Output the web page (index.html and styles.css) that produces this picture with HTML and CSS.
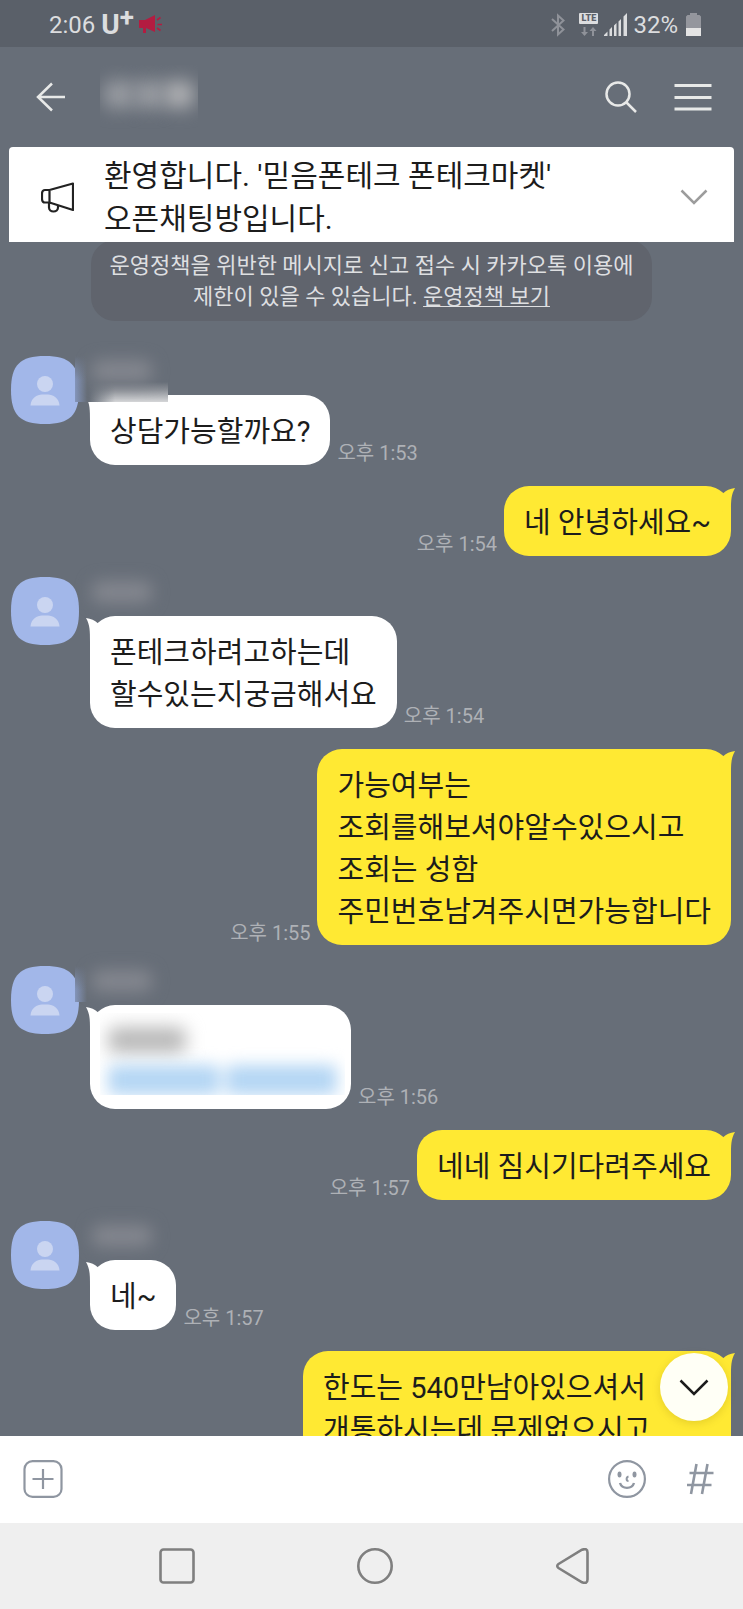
FILE: index.html
```html
<!DOCTYPE html>
<html lang="ko">
<head>
<meta charset="utf-8">
<meta name="viewport" content="width=device-width, initial-scale=1">
<title>오픈채팅</title>
<link rel="stylesheet" href="styles.css">
</head>
<body>
<svg class="defs" aria-hidden="true">
  <symbol id="avatar" viewBox="0 0 68 68">
    <path d="M34 0C59 0 68 9 68 34S59 68 34 68 0 59 0 34 9 0 34 0Z" fill="#a2b7e9"/>
    <circle cx="34" cy="28" r="8" fill="#cad5f1"/>
    <path d="M19.500 49.500C20 42 26 38.500 31 38.500h6c5 0 11 3.500 11.500 11Z" fill="#cad5f1"/>
  </symbol>
  <symbol id="tail" viewBox="0 0 16 24">
    <path d="M0 0C5 .5 9 2.500 11.500 5L16 12 12 24H4C4 13 4 7 0 0Z" fill="currentColor"/>
  </symbol>
</svg>
<div class="app">
  <div class="status">
    <span class="clock">2:06</span>
    <span class="carrier">U<span class="carrier-plus">+</span></span>
    <svg class="promo" width="24" height="20" viewBox="0 0 24 20" fill="#b31c41"><path d="M0 5h6L16 0v17L7 13v5H4v-5H0Z"/><path d="M18 5l3.500-2.500M18.500 9.500H23M18 13l3.500 2.500" stroke="#b31c41" stroke-width="1.600"/></svg>
    <span class="spacer"></span>
    <svg width="14" height="24" viewBox="0 0 14 24" fill="none" stroke="#8f9299" stroke-width="2"><path d="M1 6l11.500 10.500L7 21.500v-19L12.500 7.500 1 18"/></svg>
    <span class="network">
      <span class="lte">LTE</span>
      <svg width="16" height="9" viewBox="0 0 16 9" fill="#8f9299"><path d="M2.500 0h2v5H7L3.500 9 0 5h2.500ZM11 9h2V4h2.500L12 0 8.500 4H11Z"/></svg>
    </span>
    <svg width="24" height="23" viewBox="0 0 24 23" fill="#dcdddf"><path d="M0 23v-1l3.500-3.500V23ZM5.500 23v-6.500L8 14v9ZM10 23V12.500L12.500 10v13ZM14.500 23V8.500L17 6v17ZM19.500 23V3.500L23 0v23Z"/></svg>
    <span class="percent">32%</span>
    <svg width="15" height="23" viewBox="0 0 15 23"><path d="M4 0h7v2h2.500L15 3.500V23H0V3.500L1.500 2H4Z" fill="#94969d"/><path d="M0 15h15v8H0Z" fill="#e4e4e4"/></svg>
  </div>

  <header class="header">
    <button class="icon-button" aria-label="뒤로"><svg width="30" height="30" viewBox="0 0 30 30" fill="none" stroke="#e8e9e8" stroke-width="2.500"><path d="M29 15H2M16 1.500L2 15l14 13.500"/></svg></button>
    <div class="redacted-title"><i></i><i></i><i></i></div>
    <span class="spacer"></span>
    <button class="icon-button" aria-label="검색"><svg width="32" height="32" viewBox="0 0 32 32" fill="none" stroke="#e8e9e8" stroke-width="2.500"><circle cx="13" cy="13" r="11.500"/><path d="M21 21l10 10"/></svg></button>
    <button class="icon-button" aria-label="메뉴"><svg width="38" height="30" viewBox="0 0 38 30" fill="none" stroke="#e8e9e8" stroke-width="3"><path d="M.5 3.500h37M.5 15.500h37M.5 27h37"/></svg></button>
  </header>

  <section class="notice">
    <svg class="horn" width="33" height="31" viewBox="0 0 33 31" fill="none" stroke="#222" stroke-width="2.200" stroke-linejoin="round"><path d="M8.500 8L32 1.500V28L8.500 20.500M8.500 8v12.500M8.500 8H4Q1 8 1 12v4.500q0 4 3 4h4.500M8 20.500v5a4.500 4 0 0 0 9 0v-2"/></svg>
    <p class="notice-text">환영합니다. '믿음폰테크 폰테크마켓'<br>오픈채팅방입니다.</p>
    <button class="icon-button" aria-label="펼치기"><svg width="28" height="16" viewBox="0 0 28 16" fill="none" stroke="#9c9c9c" stroke-width="2.500"><path d="M1.500 1.500L14 14 26.500 1.500"/></svg></button>
  </section>

  <main class="chat">
    <p class="policy">운영정책을 위반한 메시지로 신고 접수 시 카카오톡 이용에<br>제한이 있을 수 있습니다. <a href="#policy">운영정책 보기</a></p>

    <div class="in">
      <svg class="avatar"><use href="#avatar"/></svg>
      <div class="smudge smudge-tall"></div>
      <div class="name"><i></i></div>
      <div class="line"><p class="bubble"><svg class="tail"><use href="#tail"/></svg>상담가능할까요?</p><time>오후 1:53</time></div>
    </div>

    <div class="out"><time>오후 1:54</time><p class="bubble"><svg class="tail"><use href="#tail"/></svg>네 안녕하세요~</p></div>

    <div class="in">
      <svg class="avatar"><use href="#avatar"/></svg>
      <div class="name"><i></i></div>
      <div class="line"><p class="bubble"><svg class="tail"><use href="#tail"/></svg>폰테크하려고하는데<br>할수있는지궁금해서요</p><time>오후 1:54</time></div>
    </div>

    <div class="out"><time>오후 1:55</time><p class="bubble"><svg class="tail"><use href="#tail"/></svg>가능여부는<br>조회를해보셔야알수있으시고<br>조회는 성함<br>주민번호남겨주시면가능합니다</p></div>

    <div class="in">
      <svg class="avatar"><use href="#avatar"/></svg>
      <div class="smudge"></div>
      <div class="name"><i></i></div>
      <div class="line">
        <div class="bubble bubble-redacted"><svg class="tail"><use href="#tail"/></svg>
          <div class="redacted"><span class="gray"></span><span class="blue"><i></i><i></i></span></div>
        </div>
        <time>오후 1:56</time>
      </div>
    </div>

    <div class="out"><time>오후 1:57</time><p class="bubble"><svg class="tail"><use href="#tail"/></svg>네네 짐시기다려주세요</p></div>

    <div class="in">
      <svg class="avatar"><use href="#avatar"/></svg>
      <div class="name"><i></i></div>
      <div class="line"><p class="bubble"><svg class="tail"><use href="#tail"/></svg>네~</p><time>오후 1:57</time></div>
    </div>

    <div class="out"><p class="bubble bubble-long"><svg class="tail"><use href="#tail"/></svg>한도는 540만남아있으셔서<br>개통하시는데 문제없으시고</p></div>

    <button class="to-bottom" aria-label="맨 아래로"><svg width="30" height="17" viewBox="0 0 30 17" fill="none" stroke="#1c1c1c" stroke-width="2.500"><path d="M1.500 1.500L15 15 28.500 1.500"/></svg></button>
  </main>

  <form class="composer">
    <button type="button" class="icon-button" aria-label="첨부"><svg width="40" height="38" viewBox="0 0 40 38" fill="none" stroke="#8f96a1" stroke-width="2.200"><rect x="1.500" y="1.100" width="37" height="35.800" rx="8"/><path d="M20 9v20M9.500 19h21"/></svg></button>
    <input class="message" type="text" aria-label="메시지 입력">
    <button type="button" class="icon-button" aria-label="이모티콘"><svg width="38" height="38" viewBox="0 0 38 38" fill="none" stroke="#8f96a1" stroke-width="2.200"><circle cx="19" cy="19" r="17.900"/><path d="M12 23c2 6.500 12 6.500 14 0" stroke-width="2.400"/><path d="M20.500 16.500c-2.500.5-2.500 4.500 0 4.500" stroke-width="2"/><g fill="#8f96a1" stroke="none"><ellipse cx="11.500" cy="14.500" rx="2" ry="3"/><ellipse cx="26.500" cy="14.500" rx="2" ry="3"/></g></svg></button>
    <button type="button" class="icon-button" aria-label="샵 검색"><svg width="28" height="32" viewBox="0 0 28 32" fill="none" stroke="#8f96a1" stroke-width="2.600"><path d="M10.500 1L5 31M21.500 1L16 31M3.500 10H27.500M1 22H25.500"/></svg></button>
  </form>

  <nav class="system-nav">
    <button aria-label="최근 앱"><svg width="36" height="36" viewBox="0 0 36 36"><rect x="1.500" y="1.500" width="33" height="33" rx="3"/></svg></button>
    <button aria-label="홈"><svg width="36" height="36" viewBox="0 0 36 36"><circle cx="18" cy="18" r="16.700"/></svg></button>
    <button aria-label="이전"><svg width="36" height="36" viewBox="0 0 36 36"><path d="M3.500 16L27 1.700Q32.500-.3 32.500 4.500v27q0 4.800-5.500 2.800L3.500 20Q1 18 3.500 16Z"/></svg></button>
  </nav>
</div>
</body>
</html>
```
FILE: styles.css
```css
* { box-sizing: border-box; }

body {
  margin: 0;
  font-family: Roboto, "Noto Sans CJK KR", sans-serif;
  color: #1c1c1c;
}

p { margin: 0; }
svg { display: block; flex: none; }
button { border: 0; padding: 0; background: none; cursor: pointer; }
.defs { position: absolute; width: 0; height: 0; }
.spacer { flex: 1; }
.icon-button { flex: none; }

.app {
  display: flex;
  flex-direction: column;
  height: 100vh;
  background: #676e78;
}

/* Status bar */
.status {
  display: flex;
  align-items: center;
  flex: none;
  height: 47px;
  padding: 2px 42px 0 49px;
  background: #5a6069;
  color: #dcdddf;
  font-size: 24px;
}
.carrier { display: flex; margin-left: 6px; font-size: 28px; font-weight: 700; line-height: 28px; }
.carrier-plus { font-size: 26px; line-height: 12px; }
.promo { margin-left: 5px; }
.network { display: flex; flex-direction: column; align-items: center; gap: 3px; margin: 0 6px 0 14px; }
.lte {
  width: 19px;
  border-radius: 1px;
  background: #dcdddf;
  color: #5a6069;
  font-size: 9px;
  font-weight: 900;
  line-height: 11px;
  text-align: center;
}
.percent { margin: 0 8px 0 5px; }

/* Room header */
.header {
  display: flex;
  align-items: center;
  flex: none;
  height: 100px;
  padding: 0 31px 0 36px;
}
.header .icon-button + .icon-button { margin-left: 37px; }
.redacted-title {
  display: flex;
  width: 98px;
  height: 64px;
  margin-left: 34px;
  padding: 16px 0 0 4px;
  overflow: hidden;
}
.redacted-title i { width: 30px; height: 27px; border-radius: 8px; background: #9b9ea4; filter: blur(9px); }
.redacted-title i:last-child { background: #b0b1b4; }

/* Notice */
.notice {
  display: flex;
  align-items: center;
  flex: none;
  margin: 0 9px;
  padding: 7px 26px 2px 32px;
  border-radius: 4px 4px 0 0;
  background: #fff;
}
.notice-text { flex: 1; margin-left: 30px; font-size: 30px; line-height: 43px; }

/* Conversation */
.chat {
  position: relative;
  display: flex;
  flex: 1;
  flex-direction: column;
  gap: 21px;
  min-height: 0;
  overflow: hidden;
}
.chat > * { flex: none; }
.policy {
  align-self: center;
  margin: -2px 0 14px;
  padding: 10px 19px 9px;
  border-radius: 24px;
  background: #60646d;
  color: #dedfe1;
  font-size: 22px;
  line-height: 31px;
  text-align: center;
}
.policy a { color: inherit; text-underline-offset: 2px; text-decoration-thickness: 1px; }

.in {
  position: relative;
  display: grid;
  grid-template-columns: 68px 1fr;
  grid-template-rows: 39px auto;
  column-gap: 11px;
  padding-left: 11px;
}
.avatar { grid-row: 1 / 3; width: 68px; height: 68px; }
.name { grid-column: 2; padding: 4px 2px; }
.name i { display: block; width: 60px; height: 22px; border-radius: 8px; background: #83868e; filter: blur(8px); }
.line { grid-column: 2; display: flex; align-items: flex-end; gap: 7px; }
.out { display: flex; justify-content: flex-end; align-items: flex-end; gap: 7px; padding-right: 12px; }

.bubble {
  position: relative;
  padding: 16px 20px 12px;
  border-radius: 25px;
  background: #fff;
  color: #1c1c1c;
  font-size: 29px;
  line-height: 42px;
}
.out .bubble { background: #ffe933; }
.bubble-long { min-width: 428px; }
.tail { position: absolute; top: 2px; left: -4px; width: 16px; height: 24px; color: #fff; }
.out .tail { right: -4px; left: auto; color: #ffe933; transform: scaleX(-1); }
time { color: #aeb1b6; font-size: 20px; line-height: 24px; }

/* Blurred personal details */
.smudge {
  position: absolute;
  top: 0;
  left: 75px;
  width: 16px;
  height: 36px;
  background:
    linear-gradient(#676e78, transparent 24px),
    linear-gradient(90deg, #8495bb, #676e78 12px);
}
.smudge-tall {
  z-index: 1;
  width: 93px;
  height: 46px;
  background:
    linear-gradient(#676e78, transparent 24px),
    linear-gradient(90deg, #8495bb, transparent 12px),
    linear-gradient(90deg, #676e78 14px, transparent 40px),
    linear-gradient(#676e78 26px, #8d9198 34px, #d5d6d8);
}
.smudge-tall + .name { z-index: 2; }
.bubble-redacted { padding: 8px 6px 14px 10px; }
.redacted { display: flex; flex-direction: column; width: 245px; height: 82px; padding: 14px 8px 0; overflow: hidden; }
.gray { width: 78px; height: 26px; border-radius: 8px; background: #b8b8b8; filter: blur(9px); }
.blue { display: flex; gap: 6px; margin-top: 12px; filter: blur(8px); }
.blue i { flex: 1; height: 30px; border-radius: 6px; background: #b4d6f4; }

.to-bottom {
  position: absolute;
  right: 15px;
  bottom: 15px;
  display: grid;
  place-items: center;
  width: 68px;
  height: 68px;
  border-radius: 50%;
  background: #fffff6;
  box-shadow: 0 2px 8px rgba(120, 100, 0, 0.2);
}

/* Composer */
.composer {
  display: flex;
  align-items: center;
  flex: none;
  height: 87px;
  padding: 0 29px 2px 23px;
  background: #fff;
}
.composer .icon-button + .icon-button { margin-left: 40px; }
.message { flex: 1; min-width: 0; height: 60px; border: 0; outline: 0; background: none; font: inherit; font-size: 29px; }

/* System navigation */
.system-nav {
  display: flex;
  justify-content: center;
  align-items: center;
  flex: none;
  gap: 162px;
  height: 86px;
  padding-left: 7px;
  background: #efefef;
}
.system-nav svg { fill: none; stroke: #7f7f7f; stroke-width: 2.6px; }
```
